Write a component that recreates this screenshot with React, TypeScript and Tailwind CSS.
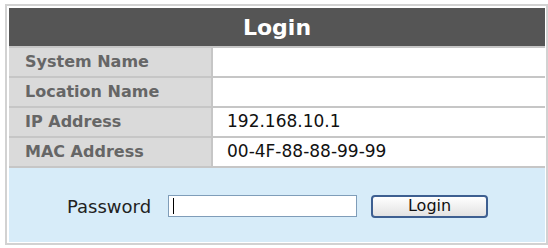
import React from 'react';

const rows = [
    { label: 'System Name', value: '' },
    { label: 'Location Name', value: '' },
    { label: 'IP Address', value: '192.168.10.1' },
    { label: 'MAC Address', value: '00-4F-88-88-99-99' },
];

export default function App() {
    return (
        <div className="w-[548px] h-[248px] bg-white pl-[5px] pt-[4px] font-['DejaVu_Sans',Verdana,sans-serif]">
            <div className="w-[543px] h-[241px] border-2 border-[#d2d2d2] pl-[2px] pt-[2px]">
                <div className="w-[536px] flex flex-col gap-[2px] bg-[#c6c6c6]">
                    <div className="h-[38px] bg-[#555555] flex items-center justify-center text-white font-bold text-[22px]">
                        Login
                    </div>
                    {rows.map((r) => (
                        <div key={r.label} className="h-[28px] flex gap-[2px]">
                            <div className="w-[202px] bg-[#dadada] flex items-center pl-[16px] text-[#666666] font-bold text-[16px]">
                                {r.label}
                            </div>
                            <div className="flex-1 bg-white flex items-center pl-[14px] text-[#111111] text-[17px]">
                                {r.value}
                            </div>
                        </div>
                    ))}
                    <div className="h-[74px] bg-[#d7ecf9] flex items-center pl-[58px] pt-[2px]">
                        <span className="text-[18px] text-[#222222]">Password</span>
                        <div className="ml-[17px] w-[189px] h-[22px] bg-white border border-[#7f9db9] flex items-center pl-[4px]">
                            <div className="w-px h-[16px] bg-black" />
                        </div>
                        <button className="ml-[14px] w-[117px] h-[23px] rounded-[4px] border-2 border-[#3d5f91] bg-gradient-to-b from-[#ffffff] to-[#e2e2e2] text-[16px] text-[#111111] flex items-center justify-center">
                            Login
                        </button>
                    </div>
                </div>
            </div>
        </div>
    );
}
